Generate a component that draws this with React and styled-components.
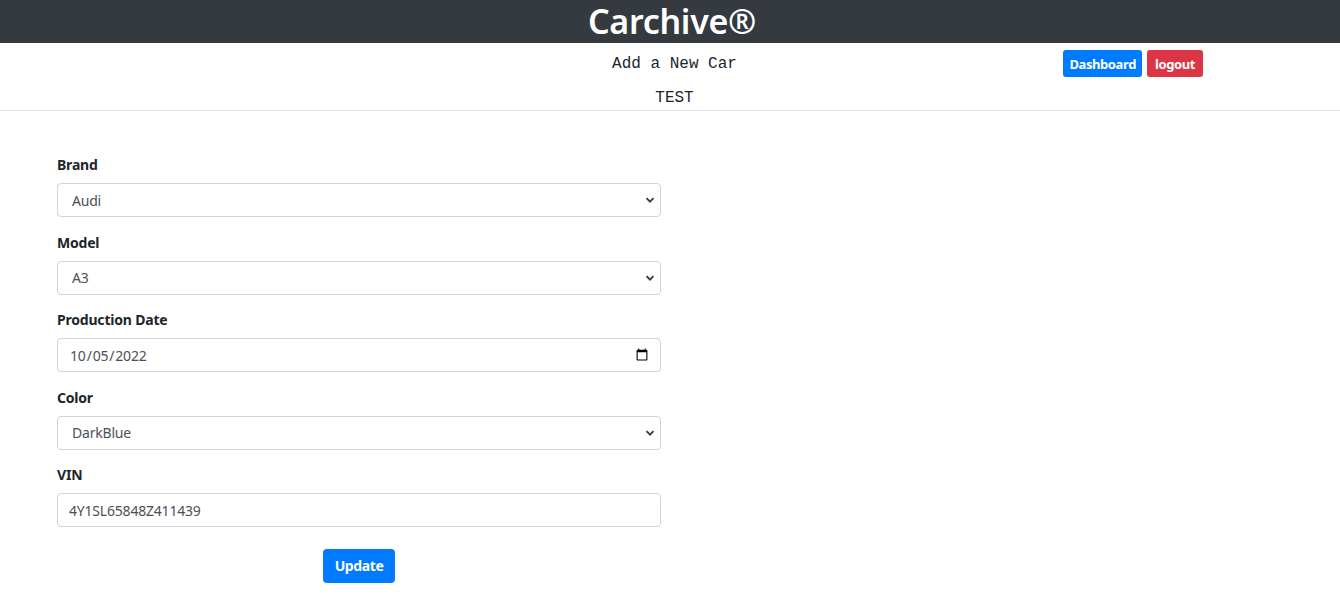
import React from "react";
import styled, { createGlobalStyle } from "styled-components";

const Global = createGlobalStyle`
  html, body { margin: 0; padding: 0; background: #fff; }
  body { font-family: "Noto Sans", "Open Sans", sans-serif; color: #212529; }
  * { box-sizing: border-box; }
`;

const Header = styled.header`
  height: 43px;
  background: #343a40;
  display: flex;
  justify-content: center;
  align-items: center;
`;

const Brand = styled.h1`
  margin: 0;
  color: #fff;
  font-family: "Noto Sans", sans-serif;
  font-weight: 600;
  font-size: 34px;
  line-height: 43px;
  letter-spacing: -0.3px;
  padding-left: 4px;
`;

const SubNav = styled.div`
  display: grid;
  grid-template-columns: 1fr auto 1fr;
  border-bottom: 1px solid #dee2e6;
  height: 68px;
`;

const Titles = styled.div`
  grid-column: 2;
  display: flex;
  flex-direction: column;
  align-items: center;
  padding-left: 9px;
  font-family: "Courier New", "Liberation Mono", monospace;
  font-size: 16px;
  color: #212529;
`;

const TitleLine = styled.div`
  line-height: 18px;
  margin-top: ${(p) => p.$top}px;
`;

const Actions = styled.div`
  grid-column: 3;
  display: flex;
  justify-content: flex-end;
  align-items: flex-start;
  gap: 5px;
  padding-top: 7px;
  padding-right: 137px;
`;

const SmallBtn = styled.button`
  height: 27px;
  padding: 0 ${(p) => (p.$danger ? 8 : 6)}px;
  border: none;
  border-radius: 3px;
  background: ${(p) => (p.$danger ? "#dc3545" : "#007bff")};
  color: #fff;
  font-family: "Noto Sans", sans-serif;
  font-weight: 700;
  font-size: 13px;
  letter-spacing: -0.4px;
  cursor: pointer;
`;

const Form = styled.form`
  width: 604px;
  margin-left: 57px;
  padding-top: 44px;
  display: flex;
  flex-direction: column;
`;

const Field = styled.div`
  display: flex;
  flex-direction: column;
  margin-bottom: 15.5px;
`;

const Label = styled.label`
  font-weight: 700;
  font-size: 14px;
  line-height: 20px;
  margin-bottom: 8px;
  color: #212529;
  letter-spacing: -0.2px;
`;

const controlCss = `
  width: 100%;
  height: 34px;
  border: 1px solid #ced4da;
  border-radius: 4px;
  background-color: #fff;
  color: #495057;
  font-family: "Noto Sans", sans-serif;
  font-size: 14px;
  letter-spacing: -0.2px;
  outline: none;
`;

const Select = styled.select`
  ${controlCss}
  appearance: none;
  padding: 0 30px 0 14px;
  background-image: url("data:image/svg+xml,%3Csvg xmlns='http://www.w3.org/2000/svg' width='10' height='8' viewBox='0 0 10 8'%3E%3Cpath d='M1.5 2.2 5 5.7 8.5 2.2' fill='none' stroke='%23343a40' stroke-width='1.8'/%3E%3C/svg%3E");
  background-repeat: no-repeat;
  background-position: calc(100% - 5px) center;
`;

const Input = styled.input`
  ${controlCss}
  padding: 0 11px;
  &::-webkit-calendar-picker-indicator { margin-right: -2px; }
`;

const SubmitRow = styled.div`
  display: flex;
  justify-content: center;
  padding-top: 6px;
`;

const Submit = styled.button`
  height: 34px;
  padding: 0 12px;
  border: none;
  border-radius: 4px;
  background: #007bff;
  color: #fff;
  font-family: "Noto Sans", sans-serif;
  font-weight: 700;
  font-size: 14px;
  letter-spacing: -0.4px;
  cursor: pointer;
`;

export default function App() {
  return (
    <>
      <Global />
      <Header>
        <Brand>Carchive®</Brand>
      </Header>
      <SubNav>
        <Titles>
          <TitleLine $top={12}>Add a New Car</TitleLine>
          <TitleLine $top={16}>TEST</TitleLine>
        </Titles>
        <Actions>
          <SmallBtn type="button">Dashboard</SmallBtn>
          <SmallBtn type="button" $danger>logout</SmallBtn>
        </Actions>
      </SubNav>
      <Form onSubmit={(e) => e.preventDefault()}>
        <Field>
          <Label>Brand</Label>
          <Select defaultValue="Audi">
            <option>Audi</option>
            <option>BMW</option>
          </Select>
        </Field>
        <Field>
          <Label>Model</Label>
          <Select defaultValue="A3">
            <option>A3</option>
            <option>A4</option>
          </Select>
        </Field>
        <Field>
          <Label>Production Date</Label>
          <Input type="date" defaultValue="2022-10-05" />
        </Field>
        <Field>
          <Label>Color</Label>
          <Select defaultValue="DarkBlue">
            <option>DarkBlue</option>
            <option>Black</option>
          </Select>
        </Field>
        <Field>
          <Label>VIN</Label>
          <Input type="text" defaultValue="4Y1SL65848Z411439" />
        </Field>
        <SubmitRow>
          <Submit type="submit">Update</Submit>
        </SubmitRow>
      </Form>
    </>
  );
}
